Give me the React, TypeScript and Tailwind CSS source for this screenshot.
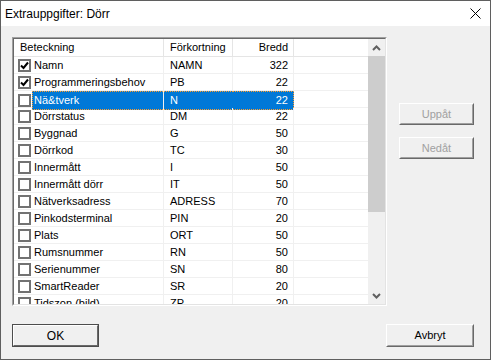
import React from "react";

type Row = { name: string; abbr: string; width: number; checked?: boolean };

const rows: Row[] = [
  { name: "Namn", abbr: "NAMN", width: 322, checked: true },
  { name: "Programmeringsbehov", abbr: "PB", width: 22, checked: true },
  { name: "Nä&tverk", abbr: "N", width: 22 },
  { name: "Dörrstatus", abbr: "DM", width: 22 },
  { name: "Byggnad", abbr: "G", width: 50 },
  { name: "Dörrkod", abbr: "TC", width: 30 },
  { name: "Innermått", abbr: "I", width: 50 },
  { name: "Innermått dörr", abbr: "IT", width: 50 },
  { name: "Nätverksadress", abbr: "ADRESS", width: 70 },
  { name: "Pinkodsterminal", abbr: "PIN", width: 20 },
  { name: "Plats", abbr: "ORT", width: 50 },
  { name: "Rumsnummer", abbr: "RN", width: 50 },
  { name: "Serienummer", abbr: "SN", width: 80 },
  { name: "SmartReader", abbr: "SR", width: 20 },
  { name: "Tidszon (bild)", abbr: "ZP", width: 20 },
];

const SELECTED = 2;

function CheckBox({ checked }: { checked?: boolean }) {
  return (
    <span className="flex h-[13px] w-[13px] shrink-0 items-center justify-center border-2 border-[#727272] bg-white">
      {checked && (
        <svg width="9" height="9" viewBox="0 0 9 9">
          <polyline points="1,4.5 3.5,7 8,1.5" fill="none" stroke="#000" strokeWidth="2" />
        </svg>
      )}
    </span>
  );
}

function ListRow({ row, selected }: { row: Row; selected: boolean }) {
  const text = selected ? "text-white" : "text-black";
  return (
    <div className="grid h-[17px] grid-cols-[150px_69px_61px_1fr] border-b border-[#f0f0f0]">
      <div className="flex items-center border-r border-[#f0f0f0] pl-[4px]">
        <CheckBox checked={row.checked} />
        <div
          className={`ml-[1px] flex h-full flex-1 items-center ${
            selected ? "border-y border-l border-dotted border-[#ff9d2b] bg-[#0078d7] pl-[1px]" : "pl-[2px]"
          } ${text}`}
        >
          {row.name}
        </div>
      </div>
      <div
        className={`flex items-center pl-[6px] ${
          selected ? "border-y border-dotted border-[#ff9d2b] bg-[#0078d7]" : "border-r border-[#f0f0f0]"
        } ${text}`}
      >
        {row.abbr}
      </div>
      <div
        className={`flex items-center justify-end pr-[5px] ${
          selected ? "border-y border-r border-dotted border-[#ff9d2b] bg-[#0078d7]" : "border-r border-[#f0f0f0]"
        } ${text}`}
      >
        {row.width}
      </div>
      <div />
    </div>
  );
}

function Chevron({ up }: { up?: boolean }) {
  return (
    <svg width="9" height="6" viewBox="0 0 9 6">
      <polyline
        points={up ? "1,5 4.5,1.5 8,5" : "1,1 4.5,4.5 8,1"}
        fill="none"
        stroke="#606060"
        strokeWidth="2"
      />
    </svg>
  );
}

function ClassicButton({
  label,
  disabled,
  isDefault,
  className,
}: {
  label: string;
  disabled?: boolean;
  isDefault?: boolean;
  className: string;
}) {
  return (
    <div
      className={`${className} ${
        isDefault ? "border border-[#4d4d4d]" : "border border-t-white border-l-white border-r-[#696969] border-b-[#696969]"
      } bg-[#f0f0f0]`}
    >
      <div
        className={`flex h-full w-full items-center justify-center ${
          isDefault
            ? "border border-t-white border-l-white border-r-[#696969] border-b-[#696969]"
            : "border border-t-[#f0f0f0] border-l-[#f0f0f0] border-r-[#a0a0a0] border-b-[#a0a0a0]"
        } ${disabled ? "text-[#a0a0a0]" : "text-black"}`}
      >
        {label}
      </div>
    </div>
  );
}

export default function App() {
  return (
    <div
      className="flex h-[360px] w-[491px] flex-col border border-[#5f5f5f] bg-[#f0f0f0] text-[11px]"
      style={{ fontFamily: '"Liberation Sans", Arial, sans-serif' }}
    >
      <div className="flex h-[25px] shrink-0 items-center justify-between bg-white pl-[4px] pr-[9px] text-[12px] text-black">
        <span>Extrauppgifter: Dörr</span>
        <svg width="11" height="11" viewBox="0 0 11 11">
          <path d="M0.5 0.5 L10.5 10.5 M10.5 0.5 L0.5 10.5" stroke="#000" strokeWidth="1" />
        </svg>
      </div>

      <div className="flex flex-1 flex-col pl-[11px] pr-[16px] pt-[11px]">
        <div className="flex">
          <div className="h-[269px] w-[375px] border border-t-[#a0a0a0] border-l-[#a0a0a0] border-r-white border-b-white">
            <div className="flex h-full w-full border border-t-[#696969] border-l-[#696969] border-r-[#e3e3e3] border-b-[#e3e3e3] bg-white">
              <div className="flex-1 overflow-hidden">
                <div className="grid h-[18px] grid-cols-[150px_69px_61px_1fr] border-b border-[#e5e5e5] text-black">
                  <div className="flex items-center border-r border-[#e5e5e5] pl-[6px]">Beteckning</div>
                  <div className="flex items-center border-r border-[#e5e5e5] pl-[6px]">Förkortning</div>
                  <div className="flex items-center justify-end border-r border-[#e5e5e5] pr-[5px]">Bredd</div>
                  <div />
                </div>
                {rows.map((row, i) => (
                  <ListRow key={row.name} row={row} selected={i === SELECTED} />
                ))}
              </div>
              <div className="flex w-[17px] shrink-0 flex-col bg-[#f0f0f0]">
                <div className="flex h-[17px] items-center justify-center">
                  <Chevron up />
                </div>
                <div className="flex-1">
                  <div className="h-[156px] w-full bg-[#cdcdcd]" />
                </div>
                <div className="flex h-[17px] items-center justify-center">
                  <Chevron />
                </div>
              </div>
            </div>
          </div>
          <div className="ml-auto flex flex-col gap-[12px] pt-[66px]">
            <ClassicButton label="Uppåt" disabled className="h-[22px] w-[75px]" />
            <ClassicButton label="Nedåt" disabled className="h-[22px] w-[75px]" />
          </div>
        </div>

        <div className="mt-[18px] flex justify-between">
          <ClassicButton label="OK" isDefault className="h-[23px] w-[87px] text-[12px]" />
          <ClassicButton label="Avbryt" className="h-[23px] w-[88px]" />
        </div>
      </div>
    </div>
  );
}
